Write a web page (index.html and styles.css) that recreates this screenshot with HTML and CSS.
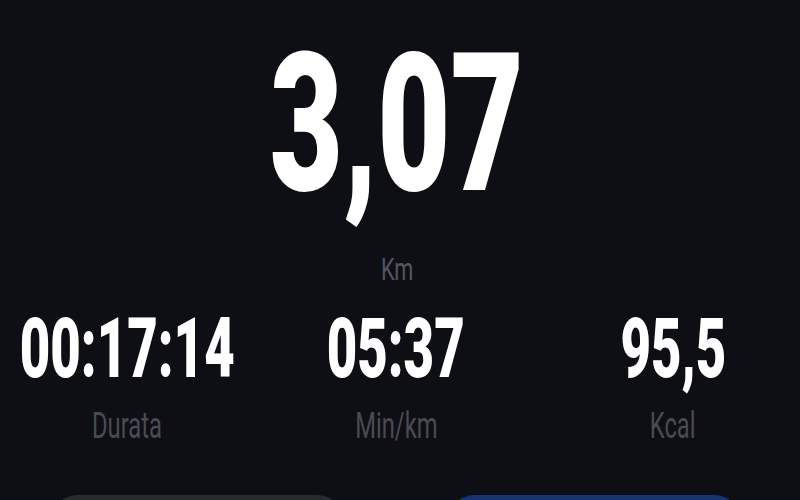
FILE: index.html
```html
<!DOCTYPE html>
<html lang="it">
<head>
<meta charset="utf-8">
<title>Corsa</title>
<link rel="stylesheet" href="styles.css">
</head>
<body>
<main class="screen">
  <section class="hero">
    <div class="hero-value"><span class="sq">3,07</span></div>
    <div class="hero-unit"><span class="sq">Km</span></div>
  </section>
  <section class="stats">
    <div class="stat">
      <div class="stat-value"><span class="sq">00:17:14</span></div>
      <div class="stat-label"><span class="sq">Durata</span></div>
    </div>
    <div class="stat">
      <div class="stat-value"><span class="sq">05:37</span></div>
      <div class="stat-label"><span class="sq">Min/km</span></div>
    </div>
    <div class="stat">
      <div class="stat-value"><span class="sq">95,5</span></div>
      <div class="stat-label"><span class="sq">Kcal</span></div>
    </div>
  </section>
  <section class="actions">
    <div class="btn btn-grey"></div>
    <div class="btn btn-blue"></div>
  </section>
</main>
</body>
</html>
```
FILE: styles.css
```css
html, body {
  margin: 0;
  padding: 0;
  height: 500px;
  overflow: hidden;
  background: #0e0f14;
}
body {
  font-family: Roboto, "Liberation Sans", sans-serif;
  color: #ffffff;
}
.screen {
  display: flex;
  flex-direction: column;
  width: 800px;
  height: 500px;
  overflow: hidden;
}
.sq {
  display: inline-block;
  transform: scaleX(0.66);
  transform-origin: center;
  white-space: nowrap;
}
.hero {
  display: flex;
  flex-direction: column;
  align-items: center;
  padding-top: 28px;
}
.hero-value {
  font-size: 193px;
  font-weight: 900;
  line-height: 193px;
  height: 193px;
  margin-left: -6px;
}
.hero-value .sq {
  transform: scaleX(0.655);
}
.hero-unit {
  margin-top: 33px;
  font-size: 31px;
  line-height: 31px;
  color: #55565c;
  margin-left: -6px;
}
.hero-unit .sq {
  transform: scaleX(0.7);
}
.stats {
  display: grid;
  grid-template-columns: 254px 284px 1fr;
  margin-top: 22px;
}
.stat {
  display: flex;
  flex-direction: column;
  align-items: center;
}
.stat:last-child {
  padding-left: 8px;
}
.stat-value {
  font-size: 83px;
  font-weight: 900;
  line-height: 83px;
}
.stat-value .sq {
  transform: scaleX(0.635);
}
.stat-label {
  margin-top: 18px;
  font-size: 36px;
  line-height: 36px;
  color: #4a4b52;
}
.actions {
  display: grid;
  grid-template-columns: 295px 295px;
  justify-content: space-between;
  padding: 0 58px 0 50px;
  margin-top: 51px;
  flex-shrink: 0;
}
.btn {
  height: 60px;
  border-radius: 28px;
}
.btn-grey {
  background: #2a2b2e;
}
.btn-blue {
  background: #173470;
}
```
